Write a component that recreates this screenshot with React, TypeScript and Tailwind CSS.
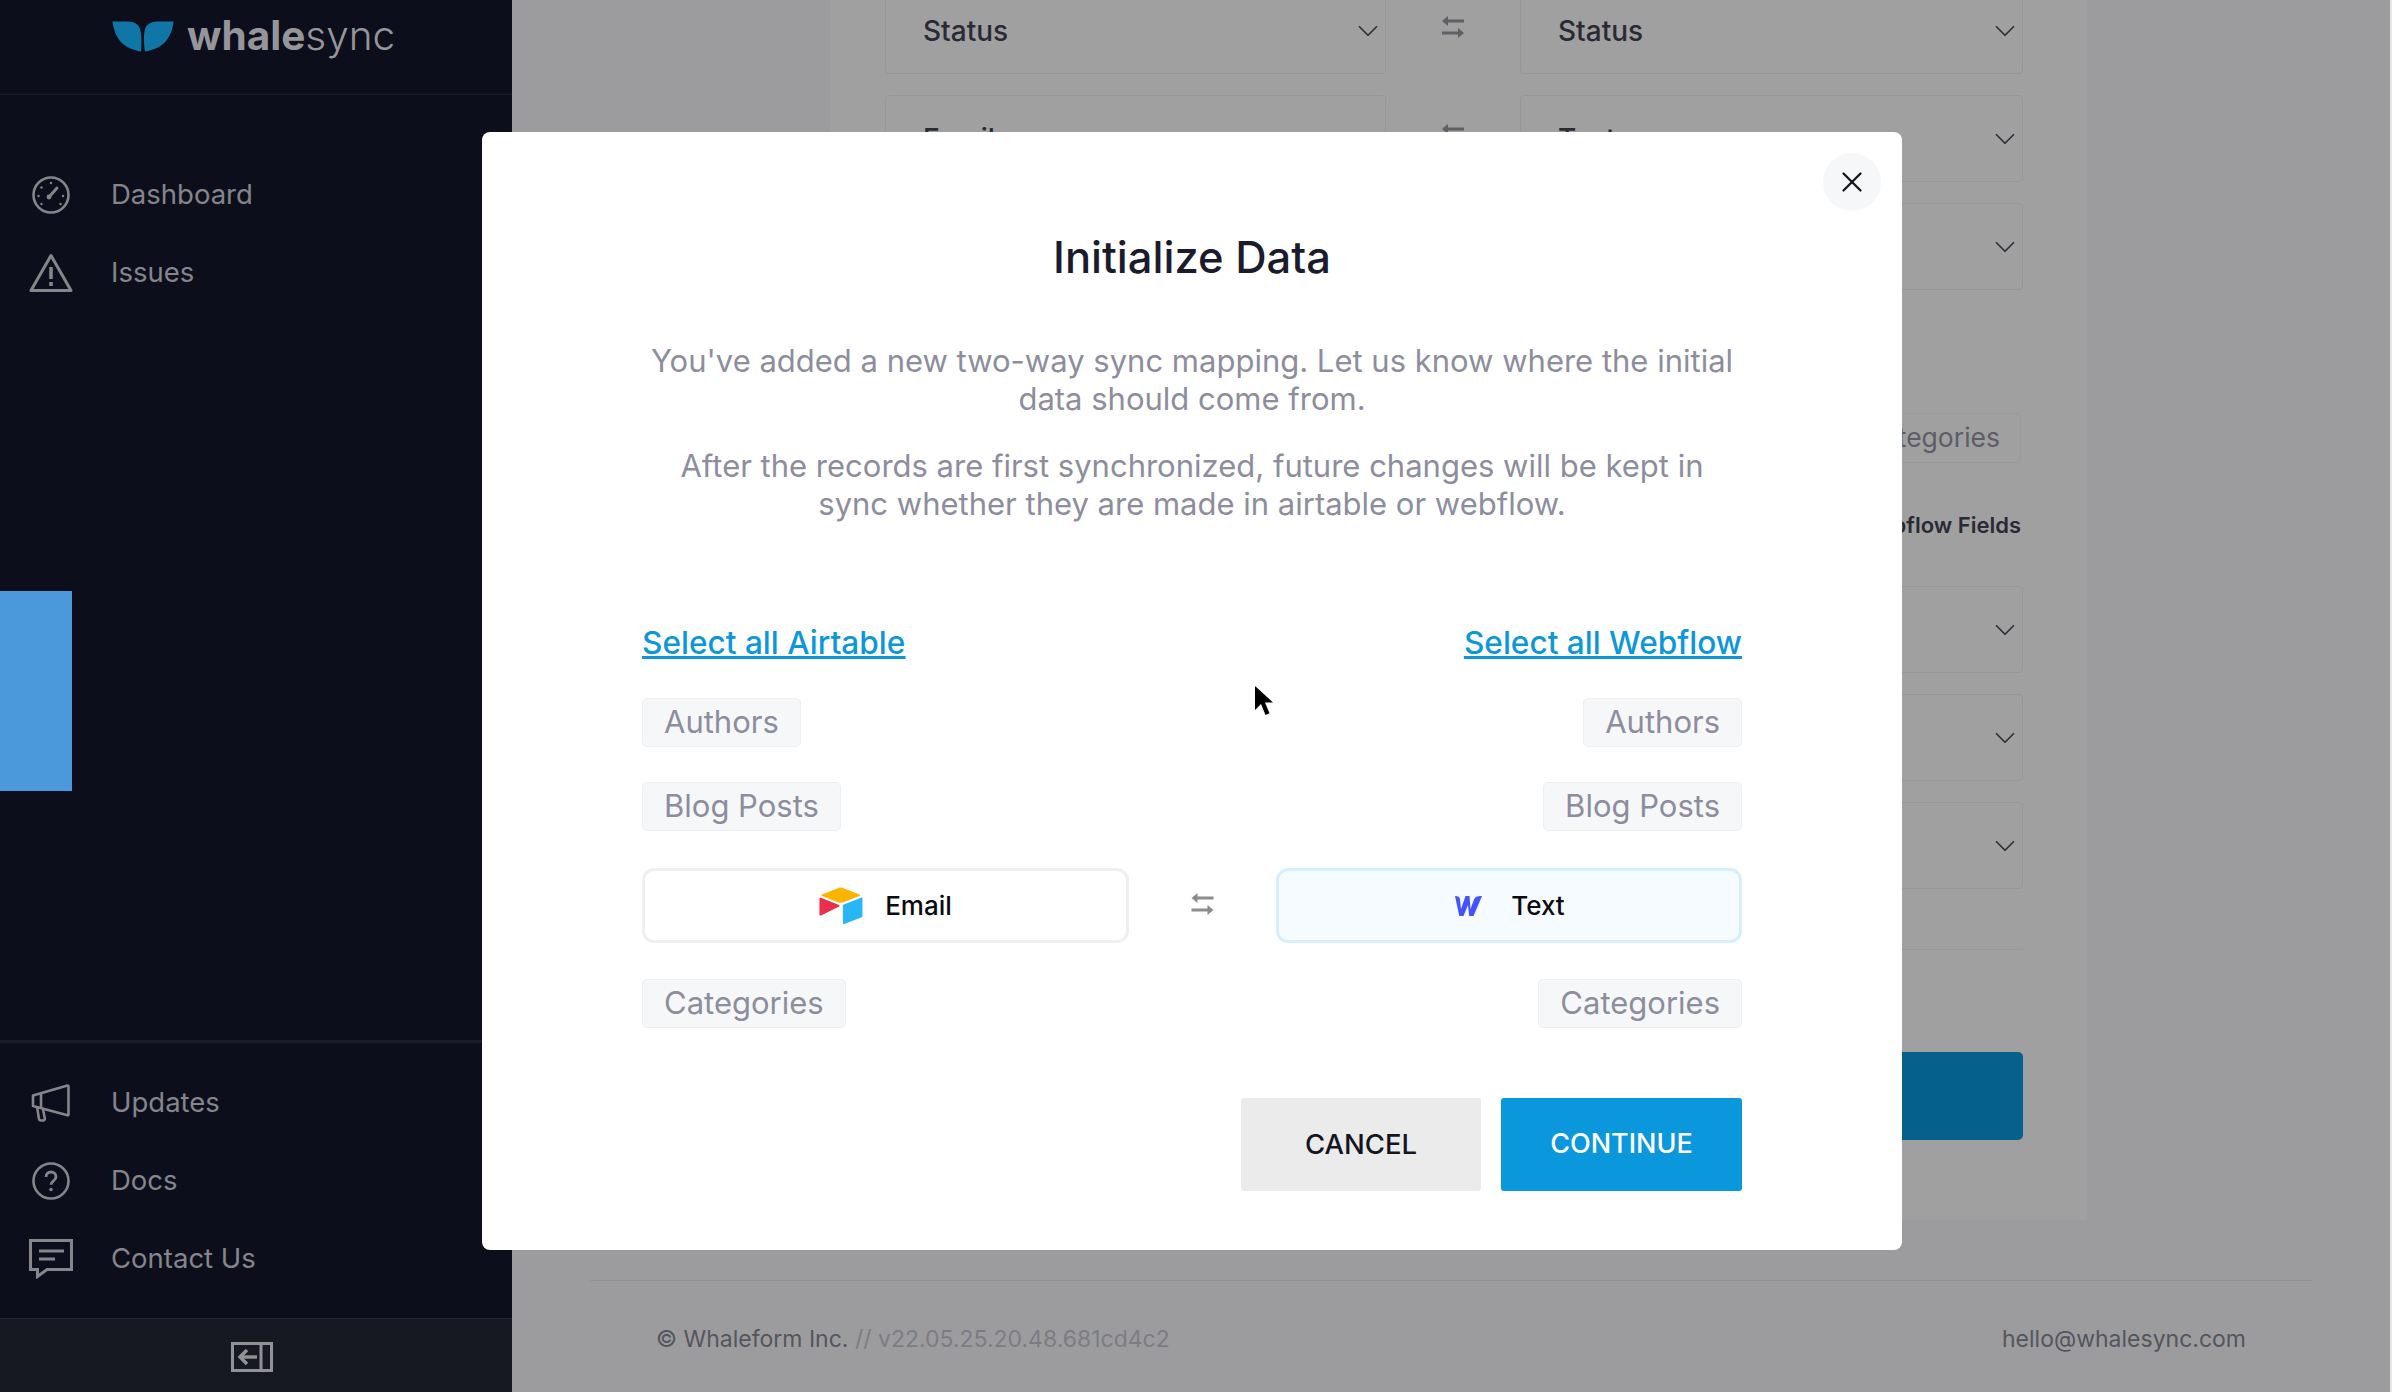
import { ChevronDown, X } from 'lucide-react'

const FONT = "font-['Inter',sans-serif]"

function SwapIcon({ className }: { className?: string }) {
  return (
    <svg viewBox="0 0 24 24" fill="currentColor" className={className}>
      <path d="M7 1 1 6l6 5V7.4h16V4.6H7z" />
      <path d="M17 13l6 5-6 5v-3.6H1v-2.8h16z" />
    </svg>
  )
}

function GaugeIcon() {
  return (
    <svg viewBox="0 0 40 40" fill="none" stroke="#85858b" strokeWidth="2.6" className="h-10 w-10">
      <circle cx="20" cy="20" r="17.5" />
      <path d="M18.5 21.5 26 13" strokeWidth="3" strokeLinecap="round" />
      <circle cx="18" cy="22" r="2.4" fill="#85858b" stroke="none" />
      <g fill="#85858b" stroke="none">
        <circle cx="20" cy="8" r="1.2" />
        <circle cx="10.5" cy="12.5" r="1.2" />
        <circle cx="7.5" cy="21" r="1.2" />
        <circle cx="32" cy="21" r="1.2" />
        <circle cx="10.5" cy="29" r="1.2" />
        <circle cx="29.5" cy="29" r="1.2" />
      </g>
    </svg>
  )
}

function WarnIcon() {
  return (
    <svg viewBox="0 0 44 40" fill="none" stroke="#85858b" strokeWidth="3" strokeLinejoin="round" className="h-10 w-11">
      <path d="M22 2.5 2 37.5h40z" />
      <path d="M22 14v12" strokeWidth="3.6" />
      <path d="M22 29v4" strokeWidth="3.6" />
    </svg>
  )
}

function MegaphoneIcon() {
  return (
    <svg viewBox="0 0 40 38" fill="none" stroke="#85858b" strokeWidth="2.6" strokeLinejoin="round" className="h-[38px] w-10">
      <path d="M2 11.5 36.5 1.5c.6 0 1 .4 1 1v28c0 .7-.5 1-1 .8L2 22z" />
      <path d="M10 9v15" />
      <path d="M6 22.5l2 12.5c.2 1 1 1.5 2 1.5h2c1.2 0 2-1 1.8-2.2L12 25" />
    </svg>
  )
}

function HelpIcon() {
  return (
    <svg viewBox="0 0 40 40" fill="none" stroke="#85858b" strokeWidth="2.6" className="h-10 w-10">
      <circle cx="20" cy="20" r="17.5" />
      <path d="M15 16c0-3 2.3-5 5-5s5 2 5 4.8c0 4-5 4-5 8" strokeWidth="2.8" />
      <circle cx="20" cy="28.5" r="1.8" fill="#85858b" stroke="none" />
    </svg>
  )
}

function ChatIcon() {
  return (
    <svg viewBox="0 0 44 40" fill="none" stroke="#85858b" strokeWidth="3" className="h-10 w-11">
      <path d="M1.5 1.5h41v29H18l-9.5 7v-7h-7z" />
      <path d="M10 12h25" />
      <path d="M10 20h16" />
    </svg>
  )
}

function CollapseIcon() {
  return (
    <svg viewBox="0 0 42 30" fill="none" stroke="#929296" strokeWidth="3" className="h-[30px] w-[42px]">
      <rect x="1.5" y="1.5" width="39" height="27" />
      <path d="M30 1.5v27" />
      <path d="M9 15h17" strokeWidth="3.4" />
      <path d="M16 8l-7 7 7 7" strokeWidth="3.4" />
    </svg>
  )
}

function AirtableLogo() {
  return (
    <svg viewBox="0 0 46 40" className="h-[38px] w-[44px]">
      <path d="M20.5 1 3 8c-.8.3-.8 1.2 0 1.5l17.5 6.8c1.4.5 3 .5 4.4 0l17.6-6.8c.8-.3.8-1.2 0-1.5L25 1c-1.5-.6-3-.6-4.5 0z" fill="#fcb400" />
      <path d="M25 19.5V38c0 .8.8 1.3 1.5 1l18.3-7.2c.5-.2.8-.6.8-1.1V12.2c0-.8-.8-1.3-1.5-1L26 18.3c-.6.2-1 .7-1 1.2z" fill="#29b6f6" />
      <path d="M21 20.4 2 30c-.8.4-1.7-.2-1.7-1V12.4c0-.9 1-1.4 1.7-1L21 19c.5.3.5 1.1 0 1.4z" fill="#e8304d" />
    </svg>
  )
}

function WebflowLogo() {
  return (
    <svg viewBox="0 0 30 22" className="h-[22px] w-[30px]">
      <path d="M2 1c3.5 0 4.800 1 5 3.500l1 9.500L12.500 1h4l1 13L21 4.500C22 2 24 1 29 1l-8.500 20h-4.300l-1.200-11L10.500 21H6.300z" fill="#4353ff" />
    </svg>
  )
}

function LeafLogo() {
  return (
    <svg viewBox="0 0 66 34" className="h-8 w-[65px]">
      <path d="M0 1.500h14c8 0 13 2 15 7 2 6 2 14 1.500 25C17 31 3 25 0 1.500z" fill="#0f76a6" />
      <path d="M65 1.500H50c-8 0-13 2-15 7-2 6-2 14-.5 25C48 31 62 25 65 1.500z" fill="#0f76a6" />
    </svg>
  )
}

function NavItem({ icon, label }: { icon: React.ReactNode; label: string }) {
  return (
    <div className="flex h-[78px] items-center">
      <div className="flex w-[111px] justify-center pr-[10px]">{icon}</div>
      <span className="text-[27.5px] text-[#85858b]">{label}</span>
    </div>
  )
}

function Chip({ label }: { label: string }) {
  return (
    <span className="inline-flex h-[49px] items-center rounded-[5px] border border-[#eeeff2] bg-[#f6f7f9] px-[21px] text-[31px] text-[#8d8d9d]">
      {label}
    </span>
  )
}

function FieldSelect({ label }: { label?: string }) {
  return (
    <div className="flex h-[87px] items-center justify-between rounded-[4px] border border-[#979799] pl-[37px]">
      <span className="text-[28px] font-medium text-[#2a2a35]">{label}</span>
      <ChevronDown className="h-[34px] w-[34px] text-[#2f2f38]" strokeWidth={1.2} />
    </div>
  )
}

function FieldRow({ left, right }: { left?: string; right?: string }) {
  return (
    <div className="grid grid-cols-[501px_134px_503px] items-center">
      <FieldSelect label={left} />
      <SwapIcon className="mx-auto mb-[8px] h-[24px] w-[26px] text-[#5f5f65]" />
      <FieldSelect label={right} />
    </div>
  )
}

export default function App() {
  return (
    <div className={`${FONT} relative flex h-[1392px] w-[2392px] overflow-hidden bg-[#9c9c9e]`}>
      {/* Sidebar */}
      <aside className="relative flex w-[512px] flex-col bg-[#0c0f1b]">
        <div className="flex h-[95px] items-start border-b border-[#1a1c28] pl-[111px] pt-[20px]">
          <LeafLogo />
          <span className="ml-[11px] -mt-[9px] text-[40.5px] leading-[50px] text-[#96969a]">
            <span className="font-bold">whale</span>
            <span className="font-light">sync</span>
          </span>
        </div>
        <nav className="pt-[61px]">
          <NavItem icon={<GaugeIcon />} label="Dashboard" />
          <NavItem icon={<WarnIcon />} label="Issues" />
        </nav>
        <div className="mt-[279px] h-[200px] w-[72px] bg-[#4b98da]" />
        <div className="flex-1" />
        <div className="border-t-[3px] border-[#1a1c28] pb-[20px] pt-[21px]">
          <NavItem icon={<MegaphoneIcon />} label="Updates" />
          <NavItem icon={<HelpIcon />} label="Docs" />
          <NavItem icon={<ChatIcon />} label="Contact Us" />
        </div>
        <div className="flex h-[74px] items-center justify-center border-t border-[#25262f] bg-[#171922] pr-[9px] pt-[2px]">
          <CollapseIcon />
        </div>
      </aside>

      {/* Page behind the dialog */}
      <main className="flex min-w-0 flex-1 flex-col">
        <div className="ml-[318px] h-[1220px] w-[1257px] bg-[#a0a0a1] pl-[55px]">
          <div className="-mt-[13px] flex flex-col gap-[21px]">
            <FieldRow left="Status" right="Status" />
            <FieldRow left="Email" right="Text" />
            <FieldRow />
          </div>
          <div className="mt-[123px] flex justify-end pr-[66px]">
            <span className="flex h-[50px] items-center rounded-[4px] border border-[#99999b] px-[20px] text-[26.5px] text-[#5d5d66]">
              Categories
            </span>
          </div>
          <div className="mt-[47px] flex h-[30px] items-center justify-end pr-[66px] text-[22px] font-semibold text-[#2a2a35]">
            Webflow Fields
          </div>
          <div className="mt-[46px] flex flex-col gap-[21px]">
            <FieldRow />
            <FieldRow />
            <FieldRow />
          </div>
          <div className="mt-[60px] h-px w-[1138px] bg-[#979799]" />
          <div className="mt-[102px] ml-[1000px] h-[88px] w-[138px] rounded-[5px] bg-[#05608c]" />
        </div>
        <footer className="mx-[78px] mt-[60px] flex items-center justify-between border-t border-[#939395] px-[66px] pt-[41px] text-[23px] text-[#55555e]">
          <span>
            © Whaleform Inc. <span className="text-[#7c7c84]">// v22.05.25.20.48.681cd4c2</span>
          </span>
          <span>hello@whalesync.com</span>
        </footer>
      </main>
      <div className="w-[2px] bg-[#e6e6e6]" />

      {/* Dialog */}
      <section className="absolute left-[482px] top-[132px] h-[1118px] w-[1420px] rounded-[8px] bg-white px-[160px] pt-[101px]">
        <button className="absolute right-[21px] top-[21px] flex h-[58px] w-[58px] items-center justify-center rounded-full bg-[#f6f7f9]">
          <X className="h-[34px] w-[34px] text-[#15151f]" strokeWidth={1.6} />
        </button>
        <h2 className="text-center text-[43.5px] font-medium leading-[48px] text-[#1b1c2b]">Initialize Data</h2>
        <div className="mt-[61px] flex flex-col gap-[30px] text-center text-[31px] leading-[37.5px] text-[#8d8d9d]">
          <p>
            You've added a new two-way sync mapping. Let us know where the initial
            <br />
            data should come from.
          </p>
          <p>
            After the records are first synchronized, future changes will be kept in
            <br />
            sync whether they are made in airtable or webflow.
          </p>
        </div>
        <div className="mt-[101px] flex justify-between text-[31.6px] font-medium leading-[40px] text-[#0e97d8] underline">
          <a>Select all Airtable</a>
          <a>Select all Webflow</a>
        </div>
        <div className="mt-[35px] flex justify-between">
          <Chip label="Authors" />
          <Chip label="Authors" />
        </div>
        <div className="mt-[35px] flex justify-between">
          <Chip label="Blog Posts" />
          <Chip label="Blog Posts" />
        </div>
        <div className="mt-[37px] flex items-center">
          <div className="flex h-[75px] w-[487px] items-center justify-center gap-[22px] rounded-[12px] border-[3px] border-[#efeff1] bg-white">
            <AirtableLogo />
            <span className="text-[26px] font-medium text-[#0b0b12]">Email</span>
          </div>
          <SwapIcon className="ml-[61px] mb-[4px] h-[24px] w-[25px] text-[#8c8c8c]" />
          <div className="ml-[61px] flex h-[75px] w-[466px] items-center justify-center gap-[28px] rounded-[12px] border-[3px] border-[#d5efff] bg-[#f6fbff]">
            <WebflowLogo />
            <span className="text-[26px] font-medium text-[#0b0b12]">Text</span>
          </div>
        </div>
        <div className="mt-[36px] flex justify-between">
          <Chip label="Categories" />
          <Chip label="Categories" />
        </div>
        <div className="mt-[70px] flex justify-end gap-[20px]">
          <button className="h-[93px] w-[240px] rounded-[3px] bg-[#ebebeb] text-[27.5px] font-medium text-[#15151f]">CANCEL</button>
          <button className="h-[93px] w-[241px] rounded-[3px] bg-[#0a97dc] text-[27px] font-medium text-white">CONTINUE</button>
        </div>
      </section>

      {/* Mouse pointer */}
      <svg viewBox="0 0 20 30" className="absolute left-[1254px] top-[686px] h-[30px] w-[20px]">
        <path d="M1 0v24l6-6 4.5 11 4-1.7L11 16.5h8z" fill="#000" />
      </svg>
    </div>
  )
}
